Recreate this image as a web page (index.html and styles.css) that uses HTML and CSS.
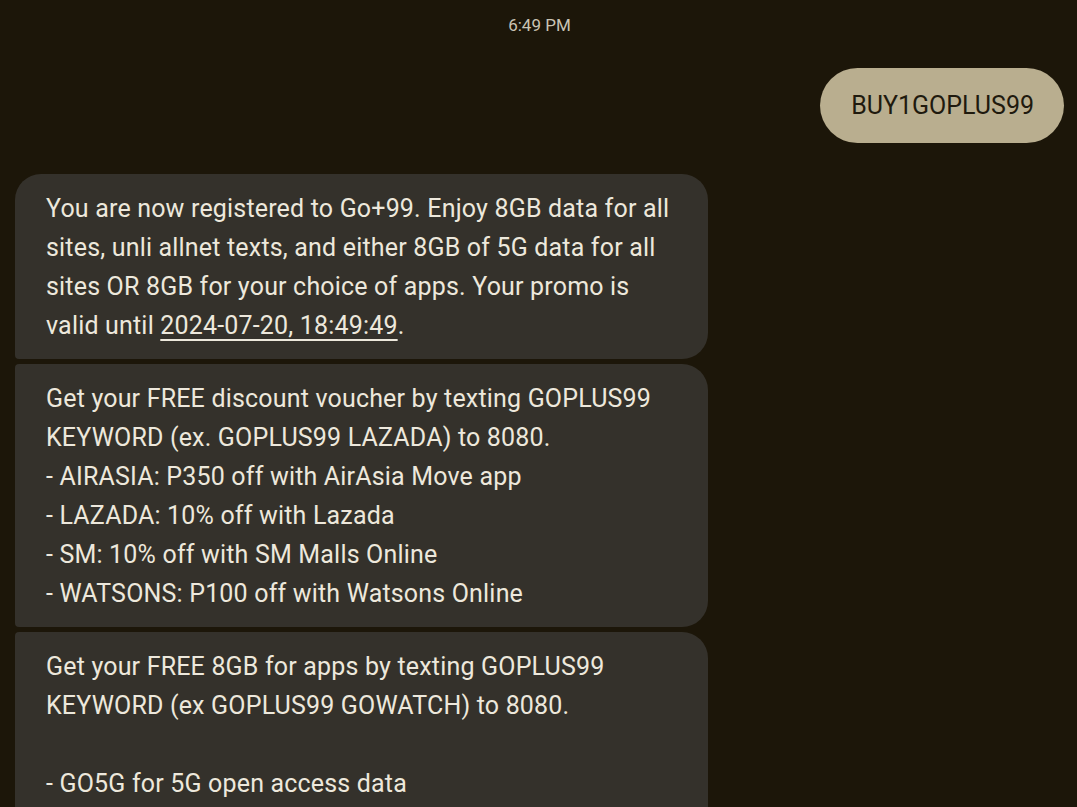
FILE: index.html
```html
<!DOCTYPE html>
<html>
<head>
<meta charset="utf-8">
<link rel="stylesheet" href="styles.css">
</head>
<body>
<div class="chat">
  <div class="time">6:49 PM</div>
  <div class="row sent-row">
    <div class="sent">BUY1GOPLUS99</div>
  </div>
  <div class="group">
    <div class="msg first">You are now registered to Go+99. Enjoy 8GB data for all sites, unli allnet texts, and either 8GB of 5G data for all sites OR 8GB for your choice of apps. Your promo is valid until <span class="link">2024-07-20, 18:49:49</span>.</div>
    <div class="msg mid">Get your FREE discount voucher by texting GOPLUS99 KEYWORD (ex. GOPLUS99 LAZADA) to 8080.<br>- AIRASIA: P350 off with AirAsia Move app<br>- LAZADA: 10% off with Lazada<br>- SM: 10% off with SM Malls Online<br>- WATSONS: P100 off with Watsons Online</div>
    <div class="msg mid tall">Get your FREE 8GB for apps by texting GOPLUS99 KEYWORD (ex GOPLUS99 GOWATCH) to 8080.<br><br>- GO5G for 5G open access data</div>
  </div>
</div>
</body>
</html>
```

FILE: styles.css
```css
html, body {
  margin: 0;
  padding: 0;
  background: #1c1609;
  height: 100%;
  overflow: hidden;
}
.chat {
  font-family: Roboto, "Noto Sans", sans-serif;
  display: flex;
  flex-direction: column;
  padding: 0 13px 0 15px;
}
.time {
  text-align: center;
  color: #c9c4b4;
  font-size: 17px;
  line-height: 20px;
  padding-top: 15px;
  height: 68px;
  box-sizing: border-box;
}
.row {
  display: flex;
}
.sent-row {
  justify-content: flex-end;
}
.sent {
  background: #b9ae8f;
  color: #1f1a0e;
  font-size: 25px;
  line-height: 39px;
  padding: 18px 30px 18px 31px;
  border-radius: 38px;
}
.group {
  display: flex;
  flex-direction: column;
  gap: 5px;
  margin-top: 31px;
  width: 693px;
}
.msg {
  background: #34312b;
  color: #ede8dc;
  font-size: 25px;
  line-height: 39px;
  letter-spacing: 0.18px;
  padding: 14.5px 31px 14.5px 31px;
  border-radius: 4px 26px 26px 4px;
}
.msg.first {
  border-top-left-radius: 26px;
}
.msg.tall {
  padding-bottom: 60px;
}
.link {
  text-decoration: underline;
  text-underline-offset: 5px;
  text-decoration-thickness: 1.5px;
}
```
